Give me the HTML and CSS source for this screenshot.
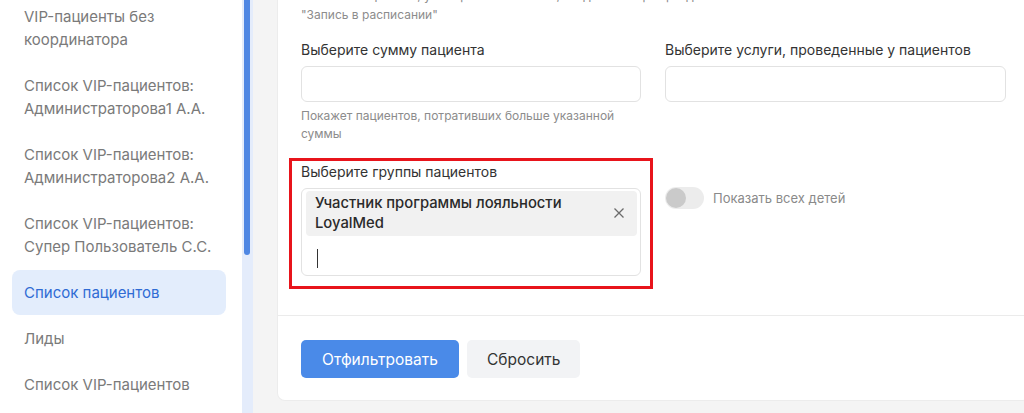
FILE: index.html
```html
<!DOCTYPE html>
<html lang="ru">
<head>
<meta charset="utf-8">
<title>Список пациентов</title>
<link rel="stylesheet" href="styles.css">
</head>
<body>
<aside class="sidebar">
  <nav class="nav">
    <a class="nav-item">VIP-пациенты без координатора</a>
    <a class="nav-item">Список VIP-пациентов: Администраторова1 А.А.</a>
    <a class="nav-item">Список VIP-пациентов: Администраторова2 А.А.</a>
    <a class="nav-item">Список VIP-пациентов: Супер Пользователь С.С.</a>
    <a class="nav-item active">Список пациентов</a>
    <a class="nav-item">Лиды</a>
    <a class="nav-item">Список VIP-пациентов</a>
  </nav>
  <div class="scroll-track"><div class="scroll-thumb"></div></div>
</aside>

<main class="main">
  <section class="card">
    <div class="form">
      <p class="hint top-hint">Покажет пациентов, у которых есть запись, созданная через раздел<br>"Запись в расписании"</p>

      <div class="grid">
        <div class="field">
          <label class="label">Выберите сумму пациента</label>
          <div class="input"></div>
          <p class="hint">Покажет пациентов, потративших больше указанной суммы</p>
        </div>
        <div class="field">
          <label class="label">Выберите услуги, проведенные у пациентов</label>
          <div class="input"></div>
        </div>

        <div class="field highlighted">
          <label class="label">Выберите группы пациентов</label>
          <div class="multiselect">
            <div class="chip">
              <span class="chip-text">Участник программы лояльности LoyalMed</span>
              <svg class="chip-close" width="12" height="12" viewBox="0 0 12 12"><path d="M1.5 1.5 10.5 10.5M10.5 1.5 1.5 10.5" stroke="#6b6b6b" stroke-width="1.3" fill="none"/></svg>
            </div>
            <div class="typing"><span class="caret"></span></div>
          </div>
        </div>
        <div class="field toggle-field">
          <label class="toggle">
            <span class="switch"><span class="knob"></span></span>
            <span class="toggle-text">Показать всех детей</span>
          </label>
        </div>
      </div>
    </div>

    <div class="actions">
      <button class="btn btn-primary">Отфильтровать</button>
      <button class="btn btn-secondary">Сбросить</button>
    </div>
  </section>
</main>
</body>
</html>
```

FILE: styles.css
```css
* { box-sizing: border-box; }

html, body {
  margin: 0;
  height: 413px;
  overflow: hidden;
}

body {
  display: flex;
  background: #f4f4f4;
  font-family: Inter, "Noto Sans", sans-serif;
  color: #333;
}

/* ---------- sidebar ---------- */
.sidebar {
  display: flex;
  flex: 0 0 253px;
  height: 413px;
  background: #fff;
}

.nav {
  flex: 1;
  display: flex;
  flex-direction: column;
  gap: 1px;
  padding: 0 16px 0 12px;
  margin-top: -6px;
  overflow: hidden;
}

.nav-item {
  display: block;
  flex: 0 0 auto;
  padding: 11px 12px;
  font-size: 15px;
  line-height: 23px;
  color: #7a7a7a;
  border-radius: 8px;
}

.nav-item.active {
  background: #e3edfc;
  color: #2f6bd4;
}

.scroll-track {
  flex: 0 0 11px;
  background: #e4ecfb;
  padding: 0 3px 0 2px;
}

.scroll-thumb {
  height: 255px;
  background: #4f87e3;
  border-radius: 0 0 3px 3px;
}

/* ---------- main ---------- */
.main {
  flex: 1;
  min-width: 0;
  padding-left: 24px;
}

.card {
  width: 753px;
  height: 401px;
  background: #fff;
  border: 1px solid #ececec;
  border-top: 0;
  border-radius: 0 0 8px 8px;
  display: flex;
  flex-direction: column;
}

.form {
  height: 316px;
  padding: 0 23px;
  border-bottom: 1px solid #ebebeb;
}

.hint {
  margin: 0;
  font-size: 12px;
  line-height: 18px;
  color: #8c8c8c;
}

.top-hint {
  margin-top: -14px;
  line-height: 19px;
}

.grid {
  display: grid;
  grid-template-columns: 340px 341px;
  column-gap: 24px;
  row-gap: 15px;
  margin-top: 16px;
  align-items: start;
}

.label {
  display: block;
  font-size: 14px;
  line-height: 20px;
  color: #333;
  margin-bottom: 6px;
}

.input {
  height: 36px;
  border: 1px solid #e2e2e2;
  border-radius: 6px;
  background: #fff;
}

.field .hint {
  margin-top: 5px;
}

/* highlighted group selector */
.highlighted {
  margin: 0 -12px;
  padding: 1px 9px 10px;
  border: 3px solid #e8141b;
}

.multiselect {
  border: 1px solid #e2e2e2;
  border-radius: 6px;
  padding: 2px 3px 0 4px;
}

.chip {
  display: flex;
  align-items: center;
  gap: 10px;
  background: #f1f1f1;
  border-radius: 4px;
  padding: 2px 12px 3px 9px;
}

.chip-text {
  flex: 1;
  font-size: 14.8px;
  line-height: 20px;
  font-weight: 500;
  color: #2a2a2a;
}

.chip-close {
  flex: 0 0 auto;
}

.typing {
  height: 39px;
  display: flex;
  align-items: center;
  padding: 6px 0 0 11px;
}

.caret {
  width: 1px;
  height: 19px;
  background: #333;
}

/* toggle */
.toggle-field {
  padding-top: 29px;
}

.toggle {
  display: flex;
  align-items: center;
  gap: 9px;
}

.switch {
  width: 39px;
  height: 22px;
  border-radius: 11px;
  background: #ececec;
  padding: 1px;
}

.knob {
  display: block;
  width: 20px;
  height: 20px;
  border-radius: 50%;
  background: #cacaca;
}

.toggle-text {
  font-size: 13px;
  line-height: 20px;
  color: #8a8a8a;
}

/* actions */
.actions {
  display: flex;
  gap: 8px;
  padding: 24px 23px 0;
}

.btn {
  height: 38px;
  border: 0;
  border-radius: 5px;
  font-family: inherit;
  font-size: 15.5px;
  padding: 0 20px;
}

.btn-primary {
  width: 158px;
  background: #4a8ae8;
  color: #fff;
}

.btn-secondary {
  width: 113px;
  background: #f2f3f5;
  color: #333;
}
```
